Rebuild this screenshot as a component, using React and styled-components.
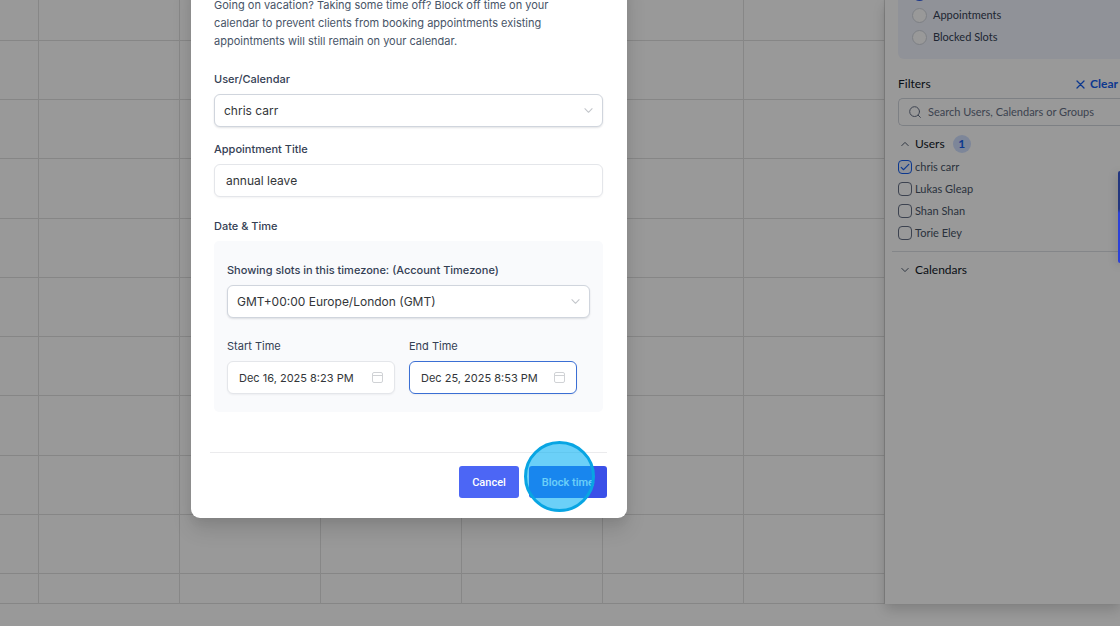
import React from "react";
import styled, { createGlobalStyle } from "styled-components";

const GlobalStyle = createGlobalStyle`
  *, *::before, *::after { box-sizing: border-box; }
  body {
    margin: 0;
    background: #fff;
    font-family: Inter, "Liberation Sans", sans-serif;
    overflow: hidden;
  }
  button, input, select { font: inherit; color: inherit; margin: 0; }
`;

const Page = styled.div`
  position: relative;
  min-height: 100vh;
  overflow: hidden;
`;

const Workspace = styled.main`
  display: flex;
  height: calc(100vh - 22px);
`;

const CalendarGrid = styled.div`
  flex: 1;
  min-width: 0;
  display: grid;
  grid-template-columns: 39px repeat(6, 1fr);
  grid-template-rows: 41px repeat(9, 1fr) 30px;
`;

const Slot = styled.div`
  border-right: 1px solid #e2e2e2;
  border-bottom: 1px solid #e0e0e0;
`;

const Sidebar = styled.aside`
  flex: 0 0 235px;
  min-width: 0;
  background: #fff;
  box-shadow: 0 6px 12px rgba(0, 0, 0, 0.16), -1px 0 2px rgba(0, 0, 0, 0.06);
  font-family: Lato, "Open Sans", sans-serif;
  font-size: 11px;
  line-height: 16px;
  color: #344054;
`;

const ViewCard = styled.fieldset`
  display: flex;
  flex-direction: column;
  justify-content: flex-end;
  gap: 4px;
  height: 59px;
  margin: 0 0 0 13px;
  padding: 0 0 13px 14px;
  border: 0;
  border-radius: 0 0 0 6px;
  background: #f1f4fe;
`;

const RadioRow = styled.label`
  display: flex;
  flex: none;
  align-items: center;
  gap: 6px;
  height: 18px;
`;

const Radio = styled.input`
  appearance: none;
  flex: none;
  width: 15px;
  height: 15px;
  border: 1px solid #d0d5dd;
  border-radius: 50%;
  background: #fff;
  &:checked { border: 4px solid #2f5be7; }
`;

const FilterHead = styled.div`
  display: flex;
  justify-content: space-between;
  align-items: center;
  height: 16px;
  margin: 17px 0 6px;
  padding: 0 2px 0 13px;
  font-size: 12px;
  color: #101828;
`;

const ClearButton = styled.button`
  display: flex;
  align-items: center;
  gap: 5px;
  padding: 0;
  border: 0;
  background: none;
  color: #155eef;
  font-weight: 700;
`;

const SearchBox = styled.label`
  display: flex;
  align-items: center;
  gap: 7px;
  height: 28px;
  margin-left: 13px;
  padding-left: 10px;
  border: 1px solid #d0d5dd;
  border-right: 0;
  border-radius: 5px 0 0 5px;
  color: #667085;
`;

const Group = styled.section`
  margin-left: 7px;
  padding: 8px 0 7px 6px;
  border-bottom: ${(p) => (p.$divided ? "1px solid #dcdfe4" : "0")};
`;

const GroupToggle = styled.button`
  display: flex;
  align-items: center;
  gap: 6px;
  height: 20px;
  padding: 0 0 0 3px;
  border: 0;
  background: none;
  font-size: 12px;
  color: #101828;
`;

const Count = styled.span`
  display: grid;
  place-items: center;
  width: 18px;
  height: 18px;
  margin-left: 2px;
  border-radius: 50%;
  background: #d1e0ff;
  color: #155eef;
  font-weight: 700;
`;

const UserList = styled.div`
  display: flex;
  flex-direction: column;
  margin-top: 2px;
`;

const CheckRow = styled.label`
  position: relative;
  display: flex;
  align-items: center;
  gap: 3px;
  height: 22px;
  color: #475467;
`;

const CheckInput = styled.input`
  appearance: none;
  flex: none;
  width: 14px;
  height: 14px;
  border: 1px solid #667085;
  border-radius: 4px;
  background: #fff;
  &:checked { border-color: #155eef; background: #eff4ff; }
`;

const Tick = styled.svg`
  position: absolute;
  left: 2px;
  pointer-events: none;
`;

const HelpTab = styled.button`
  position: absolute;
  z-index: 3;
  right: 0;
  top: 171px;
  width: 2px;
  height: 92px;
  padding: 0;
  border: 0;
  border-radius: 4px 0 0 4px;
  background: linear-gradient(#22357f 0 38px, #2b41d8 42px);
  box-shadow: 0 2px 8px rgba(0, 0, 0, 0.4);
`;

const Backdrop = styled.div`
  position: absolute;
  inset: 0;
  z-index: 2;
  display: flex;
  align-items: flex-start;
  padding-left: 191px;
  background: rgba(0, 0, 0, 0.4);
`;

const Dialog = styled.form`
  width: 436px;
  margin-top: -24px;
  padding: 20px 24px 20px 23px;
  border-radius: 0 0 9px 9px;
  background: #fff;
  box-shadow: 0 12px 20px rgba(0, 0, 0, 0.12), 0 4px 8px rgba(0, 0, 0, 0.05);
  color: #344054;
  font-size: 11px;
`;

const Intro = styled.p`
  margin: 0 0 21px;
  padding-right: 32px;
  line-height: 18px;
  color: #475467;
`;

const Field = styled.div`
  display: flex;
  flex-direction: column;
  gap: 7px;
  margin-bottom: ${(p) => p.$after || 0}px;
`;

const Label = styled.label`
  line-height: 16px;
  font-weight: ${(p) => (p.$light ? 400 : 500)};
`;

const Control = styled.div`
  display: flex;
  align-items: center;
  height: 33px;
  padding: 0 ${(p) => p.$pad || 9}px;
  border: 1px solid ${(p) => (p.$active ? "#3b6fd4" : p.$strong ? "#d0d5dd" : "#e4e6ea")};
  border-radius: 6px;
  background: #fff;
  box-shadow: 0 1px 2px rgba(16, 24, 40, ${(p) => (p.$strong ? 0.12 : 0.05)});
  color: #333639;
`;

const Select = styled.select`
  appearance: none;
  flex: 1;
  min-width: 0;
  padding: 0;
  border: 0;
  outline: 0;
  background: none;
  font-size: 12px;
`;

const TextInput = styled.input`
  flex: 1;
  min-width: 0;
  padding: 0;
  border: 0;
  outline: 0;
  background: none;
  font-size: ${(p) => (p.$small ? 11 : 12)}px;
  &::placeholder { color: #667085; opacity: 1; }
`;

const SectionTitle = styled.h3`
  margin: 0 0 7px;
  font-size: 11px;
  line-height: 16px;
  font-weight: 500;
`;

const Panel = styled.div`
  padding: 21px 13px 18px;
  border-radius: 5px;
  background: #f9fafc;
`;

const TimeRow = styled.div`
  display: grid;
  grid-template-columns: 168px 168px;
  gap: 14px;
`;

const Footer = styled.footer`
  display: flex;
  justify-content: flex-end;
  gap: 10px;
  margin: 40px -4px 0;
  padding-top: 13px;
  border-top: 1px solid #ebebed;
`;

const Button = styled.button`
  position: relative;
  height: 32px;
  padding: 0 13px;
  border: 0;
  border-radius: 3px;
  background: ${(p) => (p.$primary ? "#3a50e8" : "#4c66f5")};
  color: #fff;
  font-family: Roboto, Inter, sans-serif;
  font-weight: 500;
  white-space: nowrap;
`;

const ClickMarker = styled.span`
  position: absolute;
  left: -5px;
  top: -25px;
  width: 71px;
  height: 71px;
  border: 3px solid #08a5e3;
  border-radius: 50%;
  background: rgba(0, 174, 243, 0.58);
`;

const Chevron = ({ up, size = 8, color = "#475467" }) => (
  <svg width={size} height={size} viewBox="0 0 10 10" fill="none" stroke={color} strokeWidth="1.2" strokeLinecap="round" strokeLinejoin="round" aria-hidden="true">
    <path d={up ? "M1 7l4-4 4 4" : "M1 3l4 4 4-4"} />
  </svg>
);

const CalendarIcon = () => (
  <svg width="11" height="11" viewBox="0 0 11 11" fill="none" stroke="#d0d2d5" aria-hidden="true">
    <rect x="0.5" y="0.5" width="10" height="10" rx="1.5" />
    <path d="M0.5 3.5h10" />
  </svg>
);

const users = ["chris carr", "Lukas Gleap", "Shan Shan", "Torie Eley"];
const slots = Array.from({ length: 77 }, (_, i) => i);

function DateField({ id, label, value, active }) {
  return (
    <Field>
      <Label htmlFor={id} $light>{label}</Label>
      <Control $pad={11} $active={active}>
        <TextInput id={id} $small defaultValue={value} />
        <CalendarIcon />
      </Control>
    </Field>
  );
}

export default function App() {
  return (
    <Page>
      <GlobalStyle />
      <Workspace>
        <CalendarGrid>
          {slots.map((i) => <Slot key={i} />)}
        </CalendarGrid>
        <Sidebar>
          <ViewCard>
            <RadioRow><Radio type="radio" name="view" defaultChecked aria-label="All" /></RadioRow>
            <RadioRow><Radio type="radio" name="view" />Appointments</RadioRow>
            <RadioRow><Radio type="radio" name="view" />Blocked Slots</RadioRow>
          </ViewCard>
          <FilterHead>
            <span>Filters</span>
            <ClearButton type="button">
              <svg width="9" height="9" viewBox="0 0 9 9" stroke="currentColor" strokeWidth="1.3" strokeLinecap="round" aria-hidden="true">
                <path d="M1 1l7 7M8 1l-7 7" />
              </svg>
              Clear
            </ClearButton>
          </FilterHead>
          <SearchBox>
            <svg width="12" height="12" viewBox="0 0 12 12" fill="none" stroke="currentColor" strokeLinecap="round" aria-hidden="true">
              <circle cx="5.6" cy="5.6" r="4.9" />
              <path d="M9.2 9.2l2.2 2.2" />
            </svg>
            <TextInput $small placeholder="Search Users, Calendars or Groups" aria-label="Search" />
          </SearchBox>
          <Group $divided>
            <GroupToggle type="button"><Chevron up />Users<Count>1</Count></GroupToggle>
            <UserList>
              {users.map((name, i) => (
                <CheckRow key={name}>
                  <CheckInput type="checkbox" defaultChecked={i === 0} />
                  {i === 0 && (
                    <Tick width="10" height="10" viewBox="0 0 10 10" fill="none" stroke="#155eef" strokeWidth="1.2" strokeLinecap="round" strokeLinejoin="round">
                      <path d="M1.2 5.4l2.4 2.3L8.8 2.4" />
                    </Tick>
                  )}
                  {name}
                </CheckRow>
              ))}
            </UserList>
          </Group>
          <Group>
            <GroupToggle type="button"><Chevron />Calendars</GroupToggle>
          </Group>
        </Sidebar>
      </Workspace>

      <Backdrop>
        <Dialog role="dialog" aria-label="Block time" onSubmit={(e) => e.preventDefault()}>
          <Intro>
            Going on vacation? Taking some time off? Block off time on your calendar to prevent clients from booking appointments existing appointments will still remain on your calendar.
          </Intro>
          <Field $after={14}>
            <Label htmlFor="user">User/Calendar</Label>
            <Control $strong>
              <Select id="user"><option>chris carr</option></Select>
              <Chevron size={9} color="#c2c5ca" />
            </Control>
          </Field>
          <Field $after={21}>
            <Label htmlFor="title">Appointment Title</Label>
            <Control $pad={11}>
              <TextInput id="title" defaultValue="annual leave" />
            </Control>
          </Field>
          <SectionTitle>Date &amp; Time</SectionTitle>
          <Panel>
            <Field $after={20}>
              <Label htmlFor="zone">Showing slots in this timezone: (Account Timezone)</Label>
              <Control $strong>
                <Select id="zone"><option>GMT+00:00 Europe/London (GMT)</option></Select>
                <Chevron size={9} color="#c2c5ca" />
              </Control>
            </Field>
            <TimeRow>
              <DateField id="start" label="Start Time" value="Dec 16, 2025 8:23 PM" />
              <DateField id="end" label="End Time" value="Dec 25, 2025 8:53 PM" active />
            </TimeRow>
          </Panel>
          <Footer>
            <Button type="button">Cancel</Button>
            <Button type="submit" $primary>Block time<ClickMarker /></Button>
          </Footer>
        </Dialog>
      </Backdrop>
      <HelpTab type="button" aria-label="Open help" />
    </Page>
  );
}
